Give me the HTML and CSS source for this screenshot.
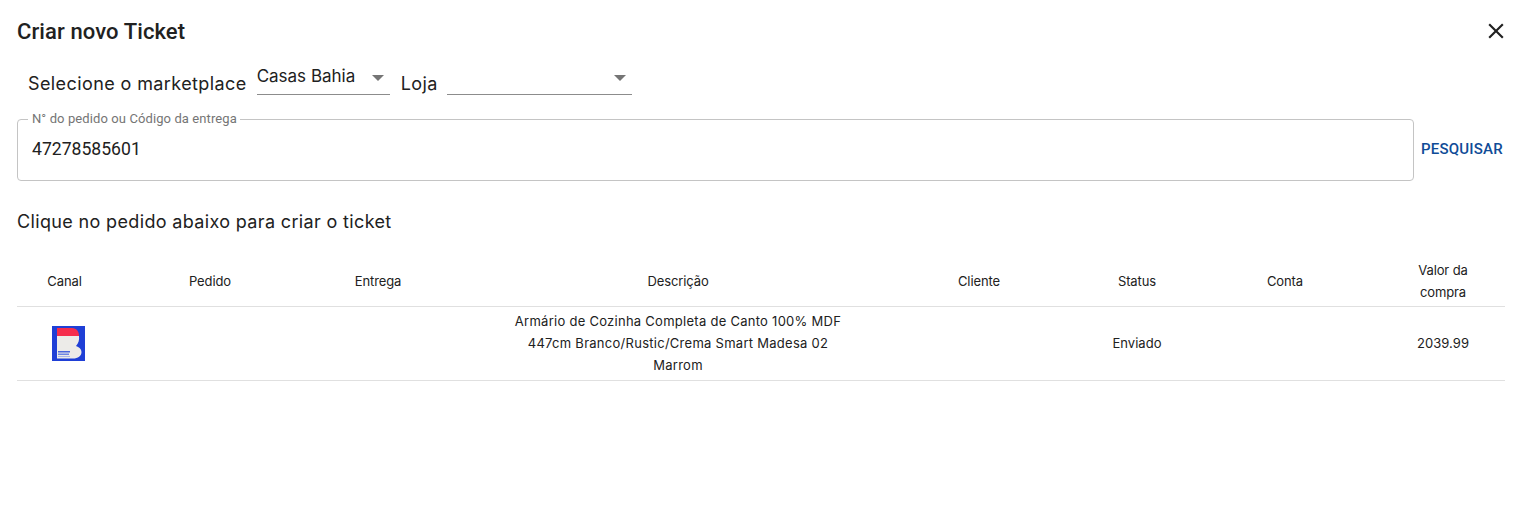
FILE: index.html
```html
<!DOCTYPE html>
<html lang="pt-BR">
<head>
    <meta charset="UTF-8">
    <title>Criar novo Ticket</title>
    <link rel="stylesheet" href="styles.css">
</head>
<body>
    <div class="dialog">
        <div class="dialog-header">
            <h2>Criar novo Ticket</h2>
            <button class="close" aria-label="Fechar">
                <svg width="26" height="26" viewBox="0 0 24 24"><path d="M19 6.41 17.59 5 12 10.59 6.41 5 5 6.41 10.59 12 5 17.59 6.41 19 12 13.41 17.59 19 19 17.59 13.41 12z" fill="#212121"/></svg>
            </button>
        </div>

        <div class="filters">
            <span class="filter-label">Selecione o marketplace</span>
            <div class="select select-market"><span>Casas Bahia</span><i class="arrow"></i></div>
            <span class="filter-label">Loja</span>
            <div class="select select-store"><span></span><i class="arrow"></i></div>
        </div>

        <div class="search-row">
            <fieldset class="search-field">
                <legend>N° do pedido ou Código da entrega</legend>
                <input type="text" value="47278585601">
            </fieldset>
            <button class="search-btn">PESQUISAR</button>
        </div>

        <p class="hint">Clique no pedido abaixo para criar o ticket</p>

        <table class="orders">
            <colgroup>
                <col class="c-canal"><col class="c-pedido"><col class="c-entrega"><col class="c-desc">
                <col class="c-cliente"><col class="c-status"><col class="c-conta"><col class="c-valor">
            </colgroup>
            <thead>
                <tr>
                    <th>Canal</th>
                    <th>Pedido</th>
                    <th>Entrega</th>
                    <th class="desc">Descrição</th>
                    <th>Cliente</th>
                    <th>Status</th>
                    <th>Conta</th>
                    <th class="valor">Valor da<br>compra</th>
                </tr>
            </thead>
            <tbody>
                <tr>
                    <td>
                        <svg class="logo" width="33" height="35" viewBox="0 0 33 35">
                            <rect width="33" height="35" fill="#1f3fd6"/>
                            <path d="M5 10V2H20C25 2 27 6 27 10Z" fill="#f52d4c"/>
                            <path d="M5 10H27C27.500 14 26.500 17 24 20C27 21 29.500 23 29.500 26C29.500 30 26 32.500 21 32.500H5Z" fill="#ecebe8"/>
                            <rect x="6" y="25" width="12" height="1.500" fill="#4a66dd"/>
                            <rect x="6" y="27.500" width="11" height="1.500" fill="#6f86e3"/>
                            <rect x="6" y="30" width="12" height="1" fill="#a9b5ea"/>
                        </svg>
                    </td>
                    <td></td>
                    <td></td>
                    <td class="desc">Armário de Cozinha Completa de Canto 100% MDF 447cm Branco/Rustic/Crema Smart Madesa 02 Marrom</td>
                    <td></td>
                    <td>Enviado</td>
                    <td></td>
                    <td class="valor">2039.99</td>
                </tr>
            </tbody>
        </table>
    </div>
</body>
</html>
```

FILE: styles.css
```css
body {
    margin: 0;
    background: #fff;
    color: #212121;
    font-family: Inter, "Open Sans", sans-serif;
}
.dialog {
    padding: 16px 21px 0 17px;
}
.dialog-header {
    display: flex;
    justify-content: space-between;
    align-items: center;
    height: 30px;
}
h2 {
    margin: 0;
    font-family: Roboto, sans-serif;
    font-size: 22px;
    font-weight: 500;
    letter-spacing: .1px;
}
.close {
    display: flex;
    margin-right: -4px;
    padding: 0;
    border: none;
    background: none;
}
.filters {
    display: flex;
    align-items: flex-end;
    gap: 11px;
    margin-top: 18px;
    padding-left: 11px;
}
.filter-label {
    font-size: 18px;
    letter-spacing: .4px;
    line-height: 22px;
}
.select {
    position: relative;
    height: 30px;
    border-bottom: 1px solid #8c8c8c;
    font-size: 17px;
    line-height: 24px;
}
.select-market {
    width: 133px;
    margin-left: -1px;
}
.select-store {
    width: 185px;
    margin-left: -2px;
}
.arrow {
    position: absolute;
    right: 6px;
    top: 11px;
    border-left: 6px solid transparent;
    border-right: 6px solid transparent;
    border-top: 6px solid #757575;
}
.search-row {
    display: flex;
    align-items: center;
    gap: 7px;
    margin-top: 16px;
}
.search-field {
    flex: 1;
    height: 70px;
    margin: 0;
    padding: 0 14px;
    border: 1px solid #c4c4c4;
    border-radius: 4px;
    box-sizing: border-box;
}
.search-field legend {
    margin-left: -4px;
    padding: 0 3px 0 4px;
    color: #757575;
    font-family: Roboto, sans-serif;
    font-size: 13px;
    letter-spacing: .1px;
    line-height: 16px;
}
.search-field input {
    width: 100%;
    margin-top: 10px;
    padding: 0;
    border: none;
    outline: none;
    color: #212121;
    font-family: Roboto, sans-serif;
    font-size: 17.600px;
    line-height: 24px;
}
.search-btn {
    width: 84px;
    padding: 6px 2px 0 0;
    border: none;
    background: none;
    color: #0f4c97;
    font-family: Roboto, sans-serif;
    font-size: 15px;
    font-weight: 500;
    letter-spacing: .2px;
    white-space: nowrap;
}
.hint {
    margin: 29px 0 0;
    font-size: 18px;
    letter-spacing: .35px;
    line-height: 24px;
}
.orders {
    width: 1488px;
    margin-top: 22px;
    border-collapse: collapse;
    table-layout: fixed;
    font-size: 13px;
    line-height: 22px;
}
.orders th {
    height: 50px;
    padding: 0;
    font-weight: 400;
    letter-spacing: -.1px;
    text-align: center;
    border-bottom: 1px solid #e0e0e0;
}
.orders td {
    height: 71px;
    padding: 0 0 2px;
    letter-spacing: .05px;
    text-align: center;
    border-bottom: 1px solid #e0e0e0;
}
.logo {
    display: block;
    margin: 2px 0 0 35px;
}
.c-canal { width: 95px; }
.c-pedido { width: 196px; }
.c-entrega { width: 140px; }
.c-desc { width: 460px; }
.c-cliente { width: 142px; }
.c-status { width: 174px; }
.c-conta { width: 122px; }
.c-valor { width: 159px; }
.orders .desc {
    padding: 0 60px;
}
.orders td.desc {
    padding-bottom: 2px;
    letter-spacing: .27px;
}
.orders .valor {
    padding-left: 35px;
}
```
